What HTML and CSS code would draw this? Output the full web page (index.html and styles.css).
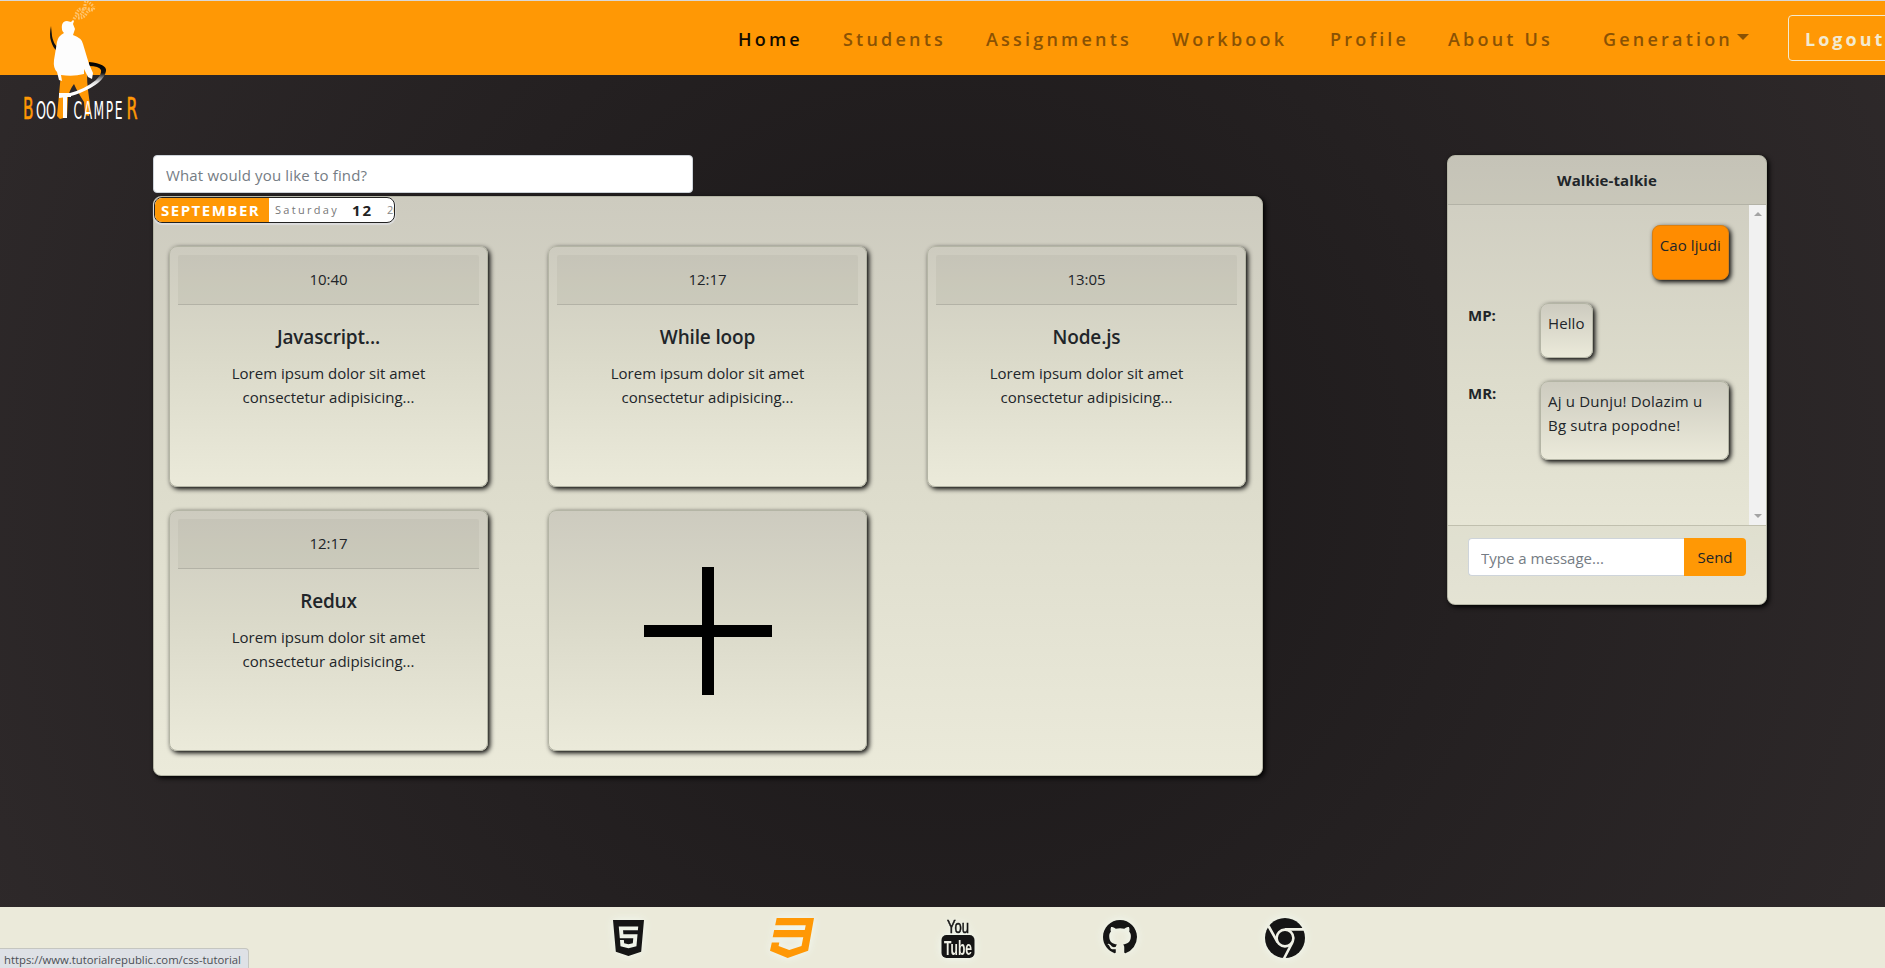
FILE: index.html
```html
<!DOCTYPE html>
<html lang="en">
<head>
<meta charset="utf-8">
<title>BootCamper</title>
<link rel="stylesheet" href="styles.css">
</head>
<body>
<header class="nav">
  <svg class="logo" width="140" height="124" viewBox="0 0 140 124">
    <defs>
      <linearGradient id="swoosh" x1="0" y1="0" x2="0" y2="1"><stop offset="0" stop-color="#000"/><stop offset=".3" stop-color="#111"/><stop offset=".55" stop-color="#ddd"/><stop offset=".7" stop-color="#fff"/></linearGradient>
    </defs>
    <g fill="none" stroke="#ffe0b0" stroke-width="3" stroke-dasharray="1.5 1.2" opacity=".6">
      <path d="M74 19q2-4 5-4t4-4 6-2 5-3"/><path d="M76 14q3-6 6-5t3-5 8 2"/><path d="M78 18q6 0 8-4t7-4"/>
    </g>
    <path d="M51 26q-2 9 0 15 2 7 6 10l1-3q-5-5-6-12z" fill="#111"/>
    <path d="M61 73h26q0 10 1 17 1 8 2 14l-1 12-4-1-1-13q-7-11-10-18-4 5-6 13l-1 20-7 2-3-3z" fill="#ff9805"/>
    <path d="M89 62q18 2 17 9-2 12-26 22-9 4-21 5v-5h11q15-4 26-13 6-6 5-10-2-4-12-4z" fill="url(#swoosh)"/>
    <path d="M62 25q1-4 5-4l4 1 2-2 1 1-1 3 2 5-2 6q9 3 10 9l6 20 4 9-1 6-4-2-4-8v5q-11 3-23 1l1 6-3-1-2-8q-4-4-3-12l3-18q1-6 7-9-3-3-2-8z" fill="#fdfdfd"/>
    <path d="M59 93h12v4h-4v21h-4V97h-4z" fill="#fdfdfd"/>
    <g font-family="DejaVu Sans Condensed, DejaVu Sans, sans-serif" fill="#fff">
      <text x="23" y="118.5" font-size="30" fill="#ff9805" stroke="#ff9805" stroke-width=".6" textLength="10.500" lengthAdjust="spacingAndGlyphs">B</text>
      <text x="36" y="118.500" font-size="24" textLength="20" lengthAdjust="spacingAndGlyphs">OO</text>
      <text transform="translate(73.500 118.500) scale(.57 1)" font-size="24" letter-spacing="5" textLength="91">CAMPE</text>
      <text x="126.500" y="118.500" font-size="30" fill="#ff9805" stroke="#ff9805" stroke-width=".6" textLength="11" lengthAdjust="spacingAndGlyphs">R</text>
    </g>
  </svg>
  <nav class="links">
    <a class="link active w-home">Home</a><a class="link w-students">Students</a><a class="link w-assign">Assignments</a><a class="link w-work">Workbook</a><a class="link w-profile">Profile</a><a class="link w-about">About Us</a><a class="link w-gen">Generation<i class="caret"></i></a>
    <button class="logout">Logout</button>
  </nav>
</header>
<main class="main">
  <section class="left">
    <input class="search" placeholder="What would you like to find?">
    <div class="panel">
      <div class="date"><b class="month">SEPTEMBER</b><span class="day">Saturday</span><b class="num">12</b><span class="year">2020</span></div>
      <div class="grid">
        <article class="card"><div class="time">10:40</div><h5>Javascript...</h5><p>Lorem ipsum dolor sit amet<br>consectetur adipisicing...</p></article>
        <article class="card"><div class="time">12:17</div><h5>While loop</h5><p>Lorem ipsum dolor sit amet<br>consectetur adipisicing...</p></article>
        <article class="card"><div class="time">13:05</div><h5>Node.js</h5><p>Lorem ipsum dolor sit amet<br>consectetur adipisicing...</p></article>
        <article class="card"><div class="time">12:17</div><h5>Redux</h5><p>Lorem ipsum dolor sit amet<br>consectetur adipisicing...</p></article>
        <article class="card add"><svg width="128" height="128" viewBox="0 0 128 128"><path d="M64 0v128M0 64h128" stroke="#000" stroke-width="12"/></svg></article>
      </div>
    </div>
  </section>
  <aside class="chat">
    <div class="chat-head">Walkie-talkie</div>
    <div class="chat-body">
      <div class="msgs">
        <div class="row mine"><div class="bubble orange">Cao ljudi</div></div>
        <div class="row"><b class="who">MP:</b><div class="bubble">Hello</div></div>
        <div class="row"><b class="who">MR:</b><div class="bubble wide">Aj u Dunju! Dolazim u<br>Bg sutra popodne!</div></div>
      </div>
      <div class="bar"><i class="up"></i><i class="down"></i></div>
    </div>
    <div class="chat-foot"><input class="msg" placeholder="Type a message..."><button class="send">Send</button></div>
  </aside>
</main>
<footer class="footer">
  <svg class="icon html" width="31" height="36" viewBox="0 32 384 448" preserveAspectRatio="none"><path d="M0 32l34.9 395.8L191.5 480l157.6-52.2L384 32H0zm308.2 127.9H124.4l4.1 49.4h175.6l-13.6 148.4-97.9 27v.3h-1.1l-98.7-27.3-6-75.8h47.7L138 320l53.5 14.5 53.7-14.5 6-62.2H84.3L71.5 112.2h241.1l-4.4 47.7z"/></svg>
  <svg class="icon css" width="44" height="40" viewBox="0 32 480 448" preserveAspectRatio="none"><path d="M480 32l-64 368-223.3 80L0 400l19.6-94.8h82l-8 40.6L210 390.2l134.1-44.4 18.8-97.1H29.5l16-82h333.7l10.5-52.7H56.3l16.3-82H480z"/></svg>
  <svg class="icon tube" width="34" height="40" viewBox="0 0 34 40"><rect x=".5" y="17" width="33" height="23" rx="5"/><g font-family="Liberation Sans, sans-serif"><text x="6" y="14.5" font-size="19" textLength="22" lengthAdjust="spacingAndGlyphs" stroke="#151515" stroke-width=".6">You</text><text x="3" y="36.500" font-size="21" font-weight="bold" fill="#f0f1e6" textLength="28" lengthAdjust="spacingAndGlyphs">Tube</text></g></svg>
  <svg class="icon git" width="34" height="34" viewBox="0 0 16 16"><path d="M8 0C3.58 0 0 3.58 0 8c0 3.54 2.29 6.53 5.47 7.59.4.07.55-.17.55-.38 0-.19-.01-.82-.01-1.49-2.01.37-2.53-.49-2.69-.94-.09-.23-.48-.94-.82-1.13-.28-.15-.68-.52-.01-.53.63-.01 1.08.58 1.23.82.72 1.21 1.87.87 2.33.66.07-.52.28-.87.51-1.07-1.78-.2-3.64-.89-3.64-3.95 0-.87.31-1.59.82-2.15-.08-.2-.36-1.02.08-2.12 0 0 .67-.21 2.2.82.64-.18 1.32-.27 2-.27s1.36.09 2 .27c1.53-1.04 2.2-.82 2.2-.82.44 1.1.16 1.92.08 2.12.51.56.82 1.27.82 2.15 0 3.07-1.87 3.75-3.65 3.95.29.25.54.73.54 1.48 0 1.07-.01 1.93-.01 2.2 0 .21.15.46.55.38A8.01 8.01 0 0 0 16 8c0-4.42-3.58-8-8-8z"/></svg>
  <svg class="icon chrome" width="40" height="40" viewBox="0 0 40 40"><circle cx="20" cy="20" r="20"/><g fill="none" stroke="#f0f1e6" stroke-width="2.6"><circle cx="20" cy="20" r="8.4"/><path d="M20 11.4L39 11.4M12.5 24.2L3.5 8M27.5 24.2L19 40.5"/></g></svg>
  <div class="status">https://www.tutorialrepublic.com/css-tutorial</div>
</footer>
</body>
</html>
```
FILE: styles.css
```css
* { box-sizing: border-box; }
body { margin: 0; width: 1885px; height: 968px; overflow: hidden; display: flex; flex-direction: column; font: 15px/24px "Open Sans", "Noto Sans", sans-serif; color: #212529; background: radial-gradient(circle at 50% 50%, #1a1718 0%, #2e292a 100%); }
input, button { font: inherit; border: 0; margin: 0; outline: 0; }
.nav { position: relative; flex: none; height: 75px; background: #ff9805; border-top: 1px solid #d8d8d8; }
.logo { position: absolute; left: 0; top: -1px; }
.links { display: flex; padding: 14px 0 0 738px; width: 1885px; overflow: hidden; }
.link { flex: none; font-size: 18px; font-weight: 600; letter-spacing: 3.2px; line-height: 48px; color: #8a5204; white-space: nowrap; }
.link.active { color: #120b00; }
.w-home { width: 105px; }
.w-students { width: 143px; }
.w-assign { width: 186px; }
.w-work { width: 158px; }
.w-profile { width: 118px; }
.w-about { width: 155px; }
.w-gen { width: 185px; }
.caret { display: inline-block; margin-left: 4px; vertical-align: 6px; border: 6px solid transparent; border-top-color: #8a5204; border-bottom: 0; }
.logout { flex: none; width: 120px; height: 46px; padding: 2px 0 0 16px; text-align: left; border: 1px solid #f3ead0; border-radius: 4px; background: none; color: #f3ead0; font-size: 18px; font-weight: 700; letter-spacing: 3px; }
.main { flex: none; height: 832px; padding: 80px 0 0 153px; display: flex; align-items: flex-start; gap: 184px; }
.left { width: 1110px; }
.search { display: block; width: 540px; height: 38px; padding: 1px 12px 0; background: #fff; border: 1px solid #ced4da; border-radius: 4px; letter-spacing: .16px; }
input::placeholder { color: #757c84; opacity: 1; }
.panel { margin-top: 3px; height: 580px; border: 1px solid #b4b5a5; border-radius: 8px; background: linear-gradient(#cdcbbf, #dddccc 50%, #ebeada); box-shadow: 2px 2px 5px #000; }
.date { display: flex; align-items: center; width: 241px; height: 26px; border: 1px solid #222; border-radius: 8px; background: #fff; overflow: hidden; white-space: nowrap; box-shadow: 0 1px 1px 1px #ddd; line-height: 24px; }
.month { width: 114px; flex: none; padding-left: 6px; background: #ff9805; color: #fff; letter-spacing: 1.5px; font-size: 15px; }
.day { width: 76px; flex: none; padding-left: 6px; font-size: 11px; letter-spacing: 2.3px; color: #777; }
.num { width: 36px; flex: none; padding-left: 7px; letter-spacing: 2px; color: #222; }
.year { padding-left: 6px; font-size: 11px; color: #888; }
.grid { display: grid; grid-template-columns: repeat(3, 319px); column-gap: 60px; row-gap: 23px; padding: 23px 0 0 15px; }
.card { height: 241px; padding: 8px; border: 1px solid #b4b5a5; border-radius: 8px; background: linear-gradient(#cdcbbf, #dad9c9 45%, #ebeada); box-shadow: 2px 2px 5px #000; text-align: center; }
.time { height: 50px; line-height: 49px; background: rgba(150, 150, 135, .13); border-bottom: 1px solid #b3b2a6; border-radius: 2px 2px 0 0; }
.card h5 { margin: 20px 0 12px; font-size: 19px; line-height: 24px; font-weight: 600; letter-spacing: -.15px; }
.card p { margin: 0; }
.add { display: flex; align-items: center; justify-content: center; }
.chat { width: 320px; height: 450px; border: 1px solid #b4b5a5; border-radius: 8px; background: linear-gradient(#cdcbbf, #dddccc 50%, #ebeada); box-shadow: 2px 2px 5px #000; overflow: hidden; }
.chat-head { height: 49px; line-height: 48px; text-align: center; font-weight: 700; background: rgba(150, 150, 135, .13); border-bottom: 1px solid #b3b2a6; letter-spacing: .1px; }
.chat-body { display: flex; height: 320px; }
.msgs { width: 301px; padding: 20px 20px 0; }
.row { display: flex; align-items: flex-start; margin-bottom: 23px; }
.mine { justify-content: flex-end; }
.who { width: 72px; line-height: 24px; }
.bubble { padding: 7px 7px 22px; border: 1px solid #b4b5a5; border-radius: 8px; background: linear-gradient(#cdcbbf, #ebeada); box-shadow: 2px 2px 5px #000; white-space: nowrap; letter-spacing: .1px; }
.bubble.wide { width: 189px; letter-spacing: .2px; }
.bubble.orange { background: #ff8c00; border-color: #d97f12; }
.bar { width: 17px; background: #f1f1f1; display: flex; flex-direction: column; justify-content: space-between; align-items: center; padding: 7px 0; }
.up, .down { border: 4px solid transparent; border-top: 0; border-bottom-color: #a3a3a3; }
.down { border-top: 4px solid #a3a3a3; border-bottom: 0; }
.chat-foot { display: flex; height: 80px; padding: 12px 20px 0; border-top: 1px solid #c0bfae; background: rgba(150, 150, 135, .08); }
.msg { width: 216px; height: 38px; padding: 2px 12px 0; border: 1px solid #ced4da; border-right: 0; border-radius: 4px 0 0 4px; background: #fff; }
.send { width: 62px; height: 38px; padding: 0; background: #ff9805; color: #212529; border-radius: 0 4px 4px 0; }
.footer { position: relative; flex: none; height: 61px; background: #ebeada; display: flex; padding: 11px 0 0 613px; }
.icon { flex: none; fill: #151515; filter: drop-shadow(0 0 5px #f3fbf4); overflow: visible; }
.html { margin: 2px 126px 0 0; }
.css { margin-right: 127px; fill: #ff9805; }
.tube { margin-right: 128px; }
.git { margin: 2px 128px 0 0; }
.status { position: absolute; left: 0; bottom: 0; width: 249px; height: 20px; padding-left: 4px; border: 1px solid #c5c6c0; border-left: 0; border-bottom: 0; border-radius: 0 4px 0 0; background: #dee1e6; color: #4b4f55; font-size: 11.3px; line-height: 21px; white-space: nowrap; }
```
